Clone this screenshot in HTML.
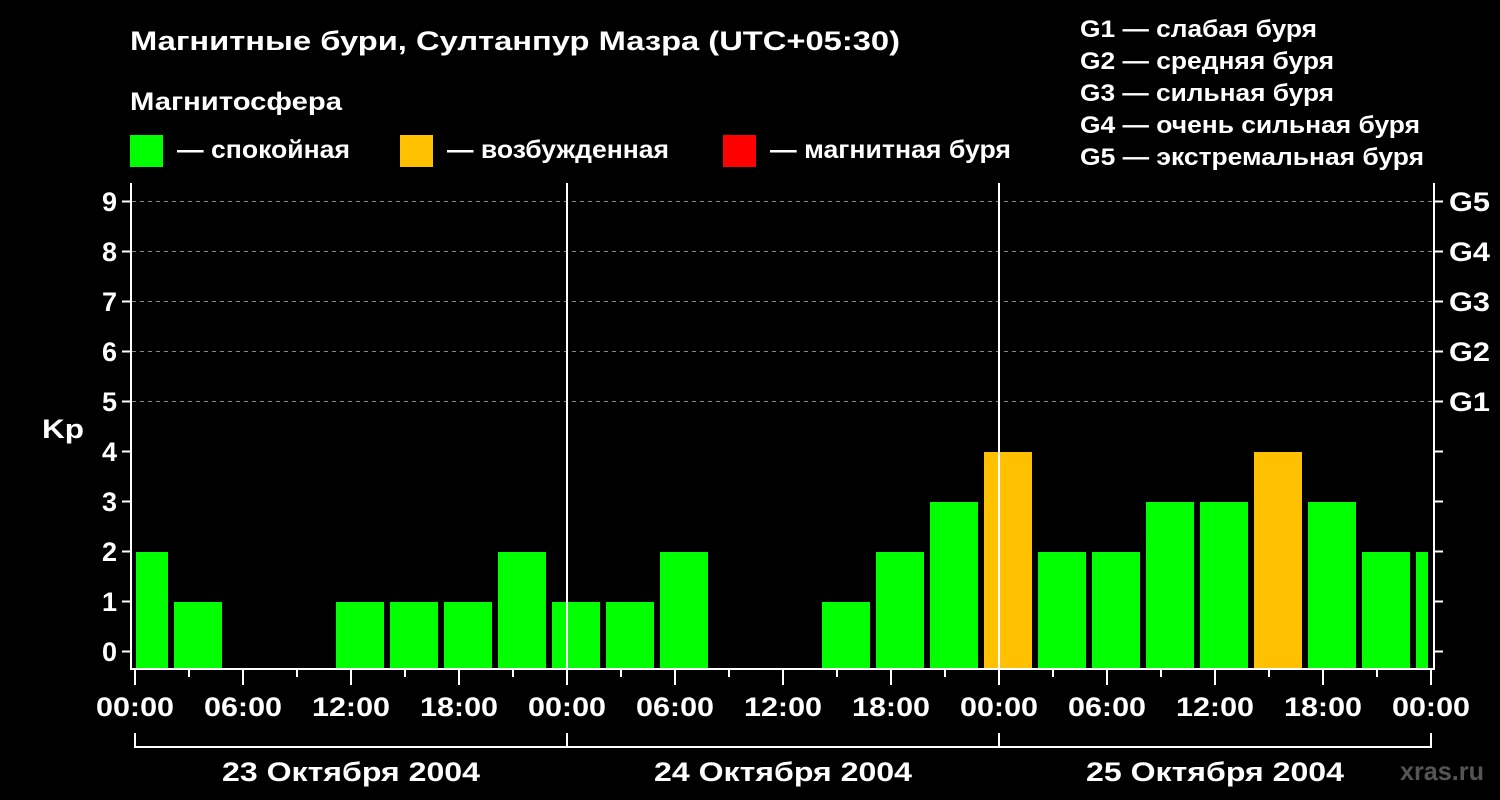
<!DOCTYPE html>
<html><head><meta charset="utf-8"><style>
html,body{margin:0;padding:0;background:#000;width:1500px;height:800px;overflow:hidden}
svg text{font-family:"Liberation Sans",sans-serif;font-weight:bold;fill:#fff}
</style></head><body>
<svg width="1500" height="800" viewBox="0 0 1500 800" xmlns="http://www.w3.org/2000/svg">
<text x="130" y="50" font-size="27" textLength="770" lengthAdjust="spacingAndGlyphs">Магнитные бури, Султанпур Мазра (UTC+05:30)</text>
<text x="130" y="110" font-size="25" textLength="212" lengthAdjust="spacingAndGlyphs">Магнитосфера</text>
<rect x="130" y="135" width="33" height="32" fill="#00ff00"/>
<text x="177" y="158" font-size="25" textLength="173" lengthAdjust="spacingAndGlyphs">— спокойная</text>
<rect x="400" y="135" width="33" height="32" fill="#ffc000"/>
<text x="447" y="158" font-size="25" textLength="222" lengthAdjust="spacingAndGlyphs">— возбужденная</text>
<rect x="723" y="135" width="33" height="32" fill="#ff0000"/>
<text x="770" y="158" font-size="25" textLength="241" lengthAdjust="spacingAndGlyphs">— магнитная буря</text>
<g font-size="24">
<text x="1080" y="37" textLength="237" lengthAdjust="spacingAndGlyphs">G1 — слабая буря</text>
<text x="1080" y="69" textLength="254" lengthAdjust="spacingAndGlyphs">G2 — средняя буря</text>
<text x="1080" y="101" textLength="254" lengthAdjust="spacingAndGlyphs">G3 — сильная буря</text>
<text x="1080" y="133" textLength="340" lengthAdjust="spacingAndGlyphs">G4 — очень сильная буря</text>
<text x="1080" y="165" textLength="344" lengthAdjust="spacingAndGlyphs">G5 — экстремальная буря</text>
</g>
<g stroke="#888" stroke-width="1" stroke-dasharray="4,4">
<line x1="132" y1="201.5" x2="1433" y2="201.5"/>
<line x1="132" y1="251.5" x2="1433" y2="251.5"/>
<line x1="132" y1="301.5" x2="1433" y2="301.5"/>
<line x1="132" y1="351.5" x2="1433" y2="351.5"/>
<line x1="132" y1="401.5" x2="1433" y2="401.5"/>
</g>
<svg x="136" y="183" width="1292" height="485" overflow="hidden">
<g transform="translate(-136,-183)">
<rect x="120" y="552" width="48" height="116" fill="#00ff00"/>
<rect x="174" y="602" width="48" height="66" fill="#00ff00"/>
<rect x="336" y="602" width="48" height="66" fill="#00ff00"/>
<rect x="390" y="602" width="48" height="66" fill="#00ff00"/>
<rect x="444" y="602" width="48" height="66" fill="#00ff00"/>
<rect x="498" y="552" width="48" height="116" fill="#00ff00"/>
<rect x="552" y="602" width="48" height="66" fill="#00ff00"/>
<rect x="606" y="602" width="48" height="66" fill="#00ff00"/>
<rect x="660" y="552" width="48" height="116" fill="#00ff00"/>
<rect x="822" y="602" width="48" height="66" fill="#00ff00"/>
<rect x="876" y="552" width="48" height="116" fill="#00ff00"/>
<rect x="930" y="502" width="48" height="166" fill="#00ff00"/>
<rect x="984" y="452" width="48" height="216" fill="#ffc000"/>
<rect x="1038" y="552" width="48" height="116" fill="#00ff00"/>
<rect x="1092" y="552" width="48" height="116" fill="#00ff00"/>
<rect x="1146" y="502" width="48" height="166" fill="#00ff00"/>
<rect x="1200" y="502" width="48" height="166" fill="#00ff00"/>
<rect x="1254" y="452" width="48" height="216" fill="#ffc000"/>
<rect x="1308" y="502" width="48" height="166" fill="#00ff00"/>
<rect x="1362" y="552" width="48" height="116" fill="#00ff00"/>
<rect x="1416" y="552" width="48" height="116" fill="#00ff00"/>
</g></svg>
<g stroke="#fff" stroke-width="2" fill="none">
<path d="M131 183 V669 H1434 V183"/>
<line x1="567" y1="183" x2="567" y2="668"/>
<line x1="999" y1="183" x2="999" y2="668"/>
<path d="M135 733 V747 H1431 V733 M567 733 V747 M999 733 V747"/>
</g>
<g stroke="#fff" stroke-width="2" id="yt">
<line x1="122" y1="201.5" x2="131" y2="201.5"/><line x1="122" y1="251.5" x2="131" y2="251.5"/>
<line x1="122" y1="301.5" x2="131" y2="301.5"/><line x1="122" y1="351.5" x2="131" y2="351.5"/>
<line x1="122" y1="401.5" x2="131" y2="401.5"/><line x1="122" y1="451.5" x2="131" y2="451.5"/>
<line x1="122" y1="501.5" x2="131" y2="501.5"/><line x1="122" y1="551.5" x2="131" y2="551.5"/>
<line x1="122" y1="601.5" x2="131" y2="601.5"/><line x1="122" y1="651.5" x2="131" y2="651.5"/>
</g>
<use href="#yt" x="1312"/>
<g stroke="#fff" stroke-width="2">
<line x1="135" y1="670" x2="135" y2="685"/><line x1="189" y1="670" x2="189" y2="677"/>
<line x1="243" y1="670" x2="243" y2="685"/><line x1="297" y1="670" x2="297" y2="677"/>
<line x1="351" y1="670" x2="351" y2="685"/><line x1="405" y1="670" x2="405" y2="677"/>
<line x1="459" y1="670" x2="459" y2="685"/><line x1="513" y1="670" x2="513" y2="677"/>
<line x1="567" y1="670" x2="567" y2="685"/><line x1="621" y1="670" x2="621" y2="677"/>
<line x1="675" y1="670" x2="675" y2="685"/><line x1="729" y1="670" x2="729" y2="677"/>
<line x1="783" y1="670" x2="783" y2="685"/><line x1="837" y1="670" x2="837" y2="677"/>
<line x1="891" y1="670" x2="891" y2="685"/><line x1="945" y1="670" x2="945" y2="677"/>
<line x1="999" y1="670" x2="999" y2="685"/><line x1="1053" y1="670" x2="1053" y2="677"/>
<line x1="1107" y1="670" x2="1107" y2="685"/><line x1="1161" y1="670" x2="1161" y2="677"/>
<line x1="1215" y1="670" x2="1215" y2="685"/><line x1="1269" y1="670" x2="1269" y2="677"/>
<line x1="1323" y1="670" x2="1323" y2="685"/><line x1="1377" y1="670" x2="1377" y2="677"/>
<line x1="1431" y1="670" x2="1431" y2="685"/>
</g>
<g font-size="27" text-anchor="end">
<text x="117" y="211">9</text><text x="117" y="261">8</text><text x="117" y="311">7</text>
<text x="117" y="361">6</text><text x="117" y="411">5</text><text x="117" y="461">4</text>
<text x="117" y="511">3</text><text x="117" y="561">2</text><text x="117" y="611">1</text>
<text x="117" y="661">0</text>
</g>
<text x="42" y="438" font-size="27" textLength="42" lengthAdjust="spacingAndGlyphs">Kp</text>
<g font-size="27">
<text x="1449" y="211" textLength="41" lengthAdjust="spacingAndGlyphs">G5</text><text x="1449" y="261" textLength="41" lengthAdjust="spacingAndGlyphs">G4</text><text x="1449" y="311" textLength="41" lengthAdjust="spacingAndGlyphs">G3</text>
<text x="1449" y="361" textLength="41" lengthAdjust="spacingAndGlyphs">G2</text><text x="1449" y="411" textLength="41" lengthAdjust="spacingAndGlyphs">G1</text>
</g>
<g font-size="27">
<text x="96" y="716" textLength="78" lengthAdjust="spacingAndGlyphs">00:00</text>
<text x="204" y="716" textLength="78" lengthAdjust="spacingAndGlyphs">06:00</text>
<text x="312" y="716" textLength="78" lengthAdjust="spacingAndGlyphs">12:00</text>
<text x="420" y="716" textLength="78" lengthAdjust="spacingAndGlyphs">18:00</text>
<text x="528" y="716" textLength="78" lengthAdjust="spacingAndGlyphs">00:00</text>
<text x="636" y="716" textLength="78" lengthAdjust="spacingAndGlyphs">06:00</text>
<text x="744" y="716" textLength="78" lengthAdjust="spacingAndGlyphs">12:00</text>
<text x="852" y="716" textLength="78" lengthAdjust="spacingAndGlyphs">18:00</text>
<text x="960" y="716" textLength="78" lengthAdjust="spacingAndGlyphs">00:00</text>
<text x="1068" y="716" textLength="78" lengthAdjust="spacingAndGlyphs">06:00</text>
<text x="1176" y="716" textLength="78" lengthAdjust="spacingAndGlyphs">12:00</text>
<text x="1284" y="716" textLength="78" lengthAdjust="spacingAndGlyphs">18:00</text>
<text x="1392" y="716" textLength="78" lengthAdjust="spacingAndGlyphs">00:00</text>
<text x="222" y="781" textLength="258" lengthAdjust="spacingAndGlyphs">23 Октября 2004</text>
<text x="654" y="781" textLength="258" lengthAdjust="spacingAndGlyphs">24 Октября 2004</text>
<text x="1086" y="781" textLength="258" lengthAdjust="spacingAndGlyphs">25 Октября 2004</text>
</g>
<text x="1400" y="780" font-size="26" style="fill:#555" textLength="84" lengthAdjust="spacingAndGlyphs">xras.ru</text>
</svg>
</body></html>
